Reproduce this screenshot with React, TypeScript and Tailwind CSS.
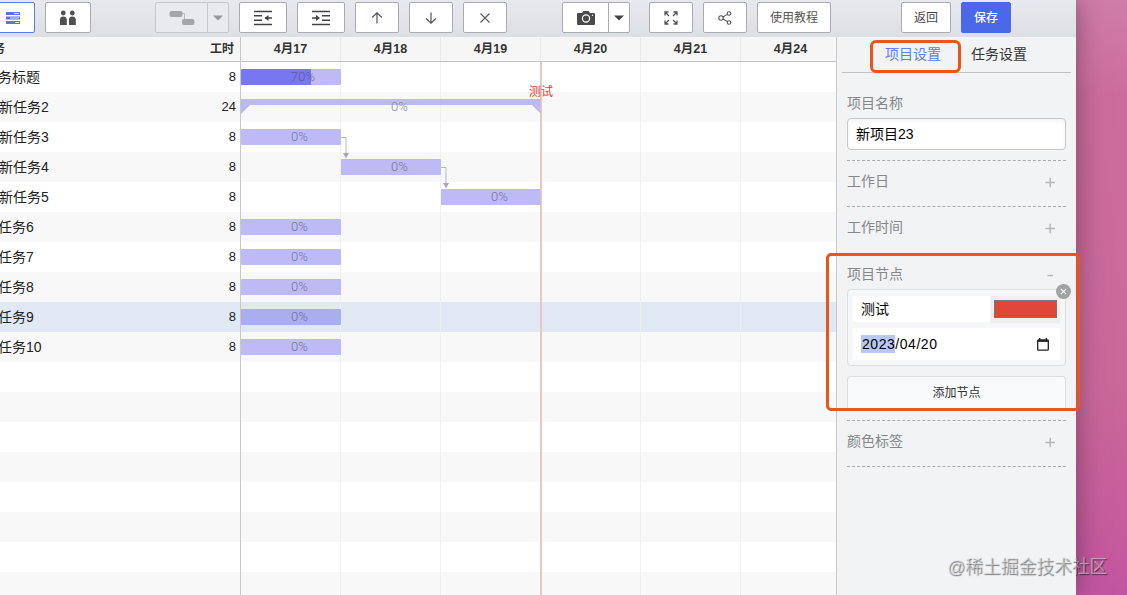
import { ReactNode } from 'react';
import clsx from 'clsx';

interface Task {
  title: string;
  hours: number;
  start: number;
  days: number;
  progress: number;
  group?: boolean;
  selected?: boolean;
}

const tasks: Task[] = [
  { title: '务标题', hours: 8, start: 0, days: 1, progress: 70 },
  { title: '新任务2', hours: 24, start: 0, days: 3, progress: 0, group: true },
  { title: '新任务3', hours: 8, start: 0, days: 1, progress: 0 },
  { title: '新任务4', hours: 8, start: 1, days: 1, progress: 0 },
  { title: '新任务5', hours: 8, start: 2, days: 1, progress: 0 },
  { title: '任务6', hours: 8, start: 0, days: 1, progress: 0 },
  { title: '任务7', hours: 8, start: 0, days: 1, progress: 0 },
  { title: '任务8', hours: 8, start: 0, days: 1, progress: 0 },
  { title: '任务9', hours: 8, start: 0, days: 1, progress: 0, selected: true },
  { title: '任务10', hours: 8, start: 0, days: 1, progress: 0 },
];

const days = ['4月17', '4月18', '4月19', '4月20', '4月21', '4月24'];
const DAY_WIDTH = 100;
const ROW_COUNT = 18;

function ToolButton({ className, children }: { className?: string; children: ReactNode }) {
  return (
    <button
      className={clsx(
        'flex h-[31px] shrink-0 items-center justify-center rounded-[2px] border text-xs',
        className || 'w-11 border-[#a9abae] bg-white text-[#555]',
      )}
    >
      {children}
    </button>
  );
}

function Caret() {
  return (
    <svg width="10" height="6" viewBox="0 0 10 6" fill="currentColor">
      <path d="M0 0.5h10L5 5.5z" />
    </svg>
  );
}

function Toolbar() {
  return (
    <header className="flex h-[37px] w-[1076px] shrink-0 overflow-hidden bg-linear-to-b from-[#e8e9ef] to-[#dcdfe3] pt-[2px]">
      <div className="-ml-[11px] flex gap-[10px]">
        <ToolButton className="w-[46px] border-[#5b7cea] bg-white pl-[2px] text-[#5577e8]">
          <svg width="14" height="12" viewBox="0 0 14 12" fill="none" stroke="currentColor">
            <path d="M0 1.5h14M0 6h14M0 10.5h14" strokeWidth="3" />
            <path d="M8 1.5h5M4 6h9M9 10.5h4" stroke="#dce4ff" />
          </svg>
        </ToolButton>
        <ToolButton className="w-[46px] border-[#a9abae] bg-white text-[#505050]">
          <svg width="18" height="16" viewBox="0 0 18 16" fill="currentColor">
            <circle cx="4.3" cy="3" r="2.4" />
            <circle cx="13.3" cy="3" r="2.4" />
            <path d="M1 15V9.500Q1 6.500 4.300 6.500T7.800 9.500V15zM10 15V9.500Q10 6.500 13.300 6.500T16.800 9.500V15z" />
          </svg>
        </ToolButton>
      </div>
      <div className="ml-16 flex">
        <ToolButton className="w-[53px] rounded-r-none border-[#c6c8cb] bg-[#e8eaed] text-[#a3a5a8]">
          <svg width="26" height="16" viewBox="0 0 26 16" fill="currentColor">
            <rect x="0.5" y="1" width="13" height="6" rx="2" />
            <rect x="13" y="9" width="12.500" height="6" rx="2" />
            <path d="M13 3.500h2.500v6" fill="none" stroke="currentColor" strokeWidth="0.7" />
          </svg>
        </ToolButton>
        <ToolButton className="-ml-px w-[22px] rounded-l-none border-[#c6c8cb] bg-[#e8eaed] text-[#96989b]">
          <Caret />
        </ToolButton>
      </div>
      <div className="ml-[10px] flex gap-[10px]">
        <ToolButton className="w-12 border-[#a9abae] bg-white text-[#444]">
          <svg width="18" height="16" viewBox="0 0 18 16" fill="none" stroke="currentColor" strokeWidth="1.500">
            <path d="M0 1.500h18M0 5.800h8M0 10.200h8M0 14.500h18M11 8h7" />
            <path d="M14.500 5v6L10.500 8z" fill="currentColor" stroke="none" />
          </svg>
        </ToolButton>
        <ToolButton className="w-12 border-[#a9abae] bg-white text-[#444]">
          <svg width="18" height="16" viewBox="0 0 18 16" fill="none" stroke="currentColor" strokeWidth="1.500">
            <path d="M0 1.500h18M10 5.800h8M10 10.200h8M0 14.500h18M0 8h7" />
            <path d="M4 5v6L8 8z" fill="currentColor" stroke="none" />
          </svg>
        </ToolButton>
        <ToolButton>
          <svg width="12" height="12" viewBox="0 0 12 12" fill="none" stroke="currentColor" strokeWidth="1.200">
            <path d="M6 11.500V1M1.200 5.500L6 0.800l4.800 4.700" />
          </svg>
        </ToolButton>
        <ToolButton>
          <svg width="12" height="12" viewBox="0 0 12 12" fill="none" stroke="currentColor" strokeWidth="1.200">
            <path d="M6 0.500V11M1.200 6.500L6 11.200l4.800-4.700" />
          </svg>
        </ToolButton>
        <ToolButton>
          <svg width="10" height="10" viewBox="0 0 10 10" fill="none" stroke="currentColor" strokeWidth="1.100">
            <path d="M0.500 0.500l9 9M9.500 0.500l-9 9" />
          </svg>
        </ToolButton>
      </div>
      <div className="ml-[55px] flex">
        <ToolButton className="w-[47px] rounded-r-none border-[#a9abae] bg-white text-[#4a4a4a]">
          <svg width="18" height="16" viewBox="0 0 18 16" fill="currentColor">
            <path d="M1 3h4l1.500-2h5L13 3h4q1 0 1 1v10q0 1-1 1H1q-1 0-1-1V4q0-1 1-1z" />
            <circle cx="9" cy="8.500" r="3.600" fill="none" stroke="white" strokeWidth="1.200" />
            <circle cx="15.500" cy="5.200" r="0.700" fill="white" />
          </svg>
        </ToolButton>
        <ToolButton className="-ml-px w-[22px] rounded-l-none border-[#a9abae] bg-white text-[#444]">
          <Caret />
        </ToolButton>
      </div>
      <div className="ml-[19px] flex gap-[10px]">
        <ToolButton>
          <svg width="14" height="14" viewBox="0 0 14 14" fill="none" stroke="currentColor" strokeWidth="1.300">
            <path d="M1 4.500V1h3.500M1 1l4 4M9.500 1H13v3.500M13 1L9 5M1 9.500V13h3.500M1 13l4-4M13 9.500V13H9.500M13 13L9 9" />
          </svg>
        </ToolButton>
        <ToolButton>
          <svg width="14" height="14" viewBox="0 0 14 14" fill="none" stroke="currentColor" strokeWidth="1.100">
            <circle cx="3" cy="7" r="2.200" />
            <circle cx="11" cy="2.500" r="1.800" />
            <circle cx="11" cy="11.500" r="1.800" />
            <path d="M5 6l4.400-2.600M5 8l4.400 2.600" />
          </svg>
        </ToolButton>
        <ToolButton className="w-[74px] border-[#a9abae] bg-white text-[#555]">使用教程</ToolButton>
      </div>
      <div className="ml-[70px] flex gap-[10px]">
        <ToolButton className="w-[50px] border-[#a9abae] bg-white text-[#444]">返回</ToolButton>
        <ToolButton className="w-[50px] border-[#4b68e6] bg-[#4b68e6] font-medium text-white">保存</ToolButton>
      </div>
    </header>
  );
}

function TaskTable() {
  return (
    <section className="w-[240px] shrink-0 overflow-hidden">
      <div className="flex h-[25px] items-center justify-between border-b border-[#c4c4c6] bg-[#f6f6f6] pr-[6px] text-xs font-bold text-[#333]">
        <span className="-ml-[7px]">务</span>
        <span>工时</span>
      </div>
      {Array.from({ length: ROW_COUNT }, (_, i) => {
        const task = tasks[i];
        return (
          <div
            key={i}
            className={clsx(
              'flex h-[30px] items-center justify-between pr-[4px] text-sm text-[#222]',
              task?.selected ? 'bg-[#dfe8f3]' : i % 2 ? 'bg-[#f8f8f8]' : 'bg-white',
            )}
          >
            {task && <span className={task.group || i > 1 && i < 5 ? '-ml-px' : '-ml-[2px]'}>{task.title}</span>}
            {task && <span className="pt-px text-[13px]">{task.hours}</span>}
          </div>
        );
      })}
    </section>
  );
}

function TaskBar({ task }: { task: Task }) {
  const style = { left: task.start * DAY_WIDTH, width: task.days * DAY_WIDTH };
  if (task.group) {
    return (
      <div className="absolute top-[7px] h-[15px]" style={style}>
        <svg className="block h-[15px] w-full" viewBox="0 0 300 15" preserveAspectRatio="none" fill="#bdb9f5">
          <path d="M0 0h300v15l-9-9H9l-9 9z" />
        </svg>
        <span className="absolute top-0 left-1/2 font-['Roboto'] text-[13px] leading-4 font-light text-[#8c8b95]">
          {task.progress}%
        </span>
      </div>
    );
  }
  return (
    <div
      className={clsx('absolute top-[7px] h-4 overflow-hidden rounded-[1px]', task.selected ? 'bg-[#a9afed]' : 'bg-[#bebaf6]')}
      style={style}
    >
      <div className="h-full bg-[#7876f0]" style={{ width: `${task.progress}%` }} />
      <span className="absolute top-0 left-1/2 font-['Roboto'] text-[13px] leading-4 font-light text-[#50506a]/70">
        {task.progress}%
      </span>
    </div>
  );
}

function Gantt() {
  return (
    <section className="relative w-[597px] shrink-0 overflow-hidden border-x border-[#c6c8ca]">
      <div className="flex h-[25px] border-b border-[#c4c4c6] bg-[#f6f6f6]">
        {days.map((day) => (
          <div
            key={day}
            className="flex w-[100px] shrink-0 items-center justify-center border-r border-[#e9e9e9] text-[12.5px] font-bold text-[#333]"
          >
            {day}
          </div>
        ))}
      </div>
      {Array.from({ length: ROW_COUNT }, (_, i) => (
        <div
          key={i}
          className={clsx('relative flex h-[30px]', tasks[i]?.selected ? 'bg-[#dfe8f3]' : i % 2 ? 'bg-[#f8f8f8]' : 'bg-white')}
        >
          {days.map((day) => (
            <div key={day} className="w-[100px] shrink-0 border-r border-[#eeeeef]/80" />
          ))}
          {tasks[i] && <TaskBar task={tasks[i]} />}
        </div>
      ))}
      {/* dependency arrows */}
      <svg className="absolute top-[25px] left-0" width="300" height="150" fill="none" stroke="#b7b7c5">
        <path d="M100 75.500h5V92M200 105.500h5V122" />
        <path d="M102 91h6l-3 5.500zM202 121h6l-3 5.500z" fill="#a9a9b5" stroke="none" />
      </svg>
      {/* milestone */}
      <div className="absolute top-[25px] bottom-0 left-[299px] w-[2px] bg-[#ecb9b6]/80" />
      <span className="absolute top-[47px] left-[288px] text-xs leading-4 text-[#d5473c]">测试</span>
    </section>
  );
}

function SectionTitle({ title, sign }: { title: string; sign: ReactNode }) {
  return (
    <div className="flex justify-between pt-[10px] pr-[11px] text-sm leading-5 text-[#858789]">
      <span>{title}</span>
      <svg className="mt-[6px]" width="10" height="11" viewBox="0 0 10 11" fill="none" stroke="#b4b6b8" strokeWidth="1.400">
        {sign}
      </svg>
    </div>
  );
}

const plus = <path d="M0.500 5.500h9.500M5.200 0.800v9.500" />;
const minus = <path d="M2.500 5.500h5.500" />;

function Settings() {
  return (
    <aside className="relative w-[239px] shrink-0 bg-[#f1f3f5]">
      <nav className="mx-[5px] flex h-9 gap-[30px] border-b border-[#bfc1c3] pt-[7px] pl-11 text-sm leading-5">
        <span className="-ml-px text-[#5b80f3]">项目设置</span>
        <span className="text-[#333]">任务设置</span>
      </nav>
      <div className="px-[10px]">
        <div className="pt-5 text-sm leading-5 text-[#858789]">项目名称</div>
        <div className="mt-[5px] flex h-8 items-center rounded border border-[#c6c8ca] bg-white px-2 text-sm text-black shadow-inner">
          新项目23
        </div>
        <div className="mt-[10px] h-[46px] border-t border-dashed border-[#abadaf]">
          <SectionTitle title="工作日" sign={plus} />
        </div>
        <div className="h-[47px] border-t border-dashed border-[#abadaf]">
          <SectionTitle title="工作时间" sign={plus} />
        </div>
        <div className="h-[167px] border-t border-dashed border-[#abadaf]">
          <SectionTitle title="项目节点" sign={minus} />
          <div className="relative mt-[5px] h-[77px] rounded border border-[#dddfe1] bg-[#f6f7f8] px-[5px] pt-[6px]">
            <div className="flex h-[26px]">
              <div className="flex flex-1 items-center rounded-xs bg-white px-2 text-sm text-black">测试</div>
              <div className="ml-px w-[69px] bg-[#efefef] px-[3px] py-[4px] shadow-xs">
                <div className="h-[18px] w-[63px] border border-[#777] bg-[#df4638]" />
              </div>
            </div>
            <div className="mt-[6px] flex h-8 items-center justify-between rounded-xs bg-white pr-[11px] pl-2 text-[14px] tracking-[0.54px] text-black">
              <span>
                <span className="inline-block h-[18px] bg-[#b9c8f2] pl-px leading-[18px]">2023</span>/04/20
              </span>
              <svg width="12" height="13" viewBox="0 0 12 13" fill="none" stroke="#222" strokeWidth="1.300">
                <rect x="0.700" y="2" width="10.600" height="10.200" rx="0.800" />
                <path d="M0.700 3h10.600" strokeWidth="1.800" />
                <path d="M2.700 0v2M9.300 0v2" />
              </svg>
            </div>
            <span className="absolute -top-[6px] -right-[6px] flex size-[15px] items-center justify-center rounded-full bg-[#a0a2a4]">
              <svg width="7" height="7" viewBox="0 0 7 7" stroke="white" strokeWidth="1.200">
                <path d="M0.800 0.800l5.400 5.400M6.200 0.800L0.800 6.200" />
              </svg>
            </span>
          </div>
          {/* runs out under the callout, so no bottom border */}
          <button className="mt-[10px] flex h-8 w-full items-center justify-center rounded-t border border-b-0 border-[#dcdee0] bg-[#f8f9fa] text-xs text-[#333]">
            添加节点
          </button>
        </div>
        <div className="h-[47px] border-y border-dashed border-[#abadaf]">
          <SectionTitle title="颜色标签" sign={plus} />
        </div>
      </div>
    </aside>
  );
}

export default function App() {
  return (
    <div className="relative flex h-[595px] w-[1127px] overflow-hidden bg-[linear-gradient(174deg,#d08db5_0%,#d07fab_15%,#cc6c9d_30%,#ca6899_70%,#c65c9c_90%,#c255a2_100%)] font-['Liberation_Sans','Noto_Sans_CJK_SC',sans-serif]">
      <div className="flex w-[1076px] shrink-0 flex-col shadow-[0_0_26px_rgba(50,30,50,0.5)]">
        <Toolbar />
        <main className="flex min-h-0 flex-1">
          <TaskTable />
          <Gantt />
          <Settings />
        </main>
      </div>
      {/* callouts */}
      <div className="absolute top-10 left-[870px] h-[33px] w-[91px] rounded-md border-[3px] border-[#e8551d]" />
      <div className="absolute top-[253px] left-[826px] h-[158px] w-[254px] rounded-[5px] border-[3px] border-[#e8551d]" />
      <span className="absolute top-[555px] left-[947px] text-[17.8px] leading-6 whitespace-nowrap text-[#e5e6e8]/50 [text-shadow:1px_1px_1px_rgba(0,0,0,0.5)]">
        @稀土掘金技术社区
      </span>
    </div>
  );
}
